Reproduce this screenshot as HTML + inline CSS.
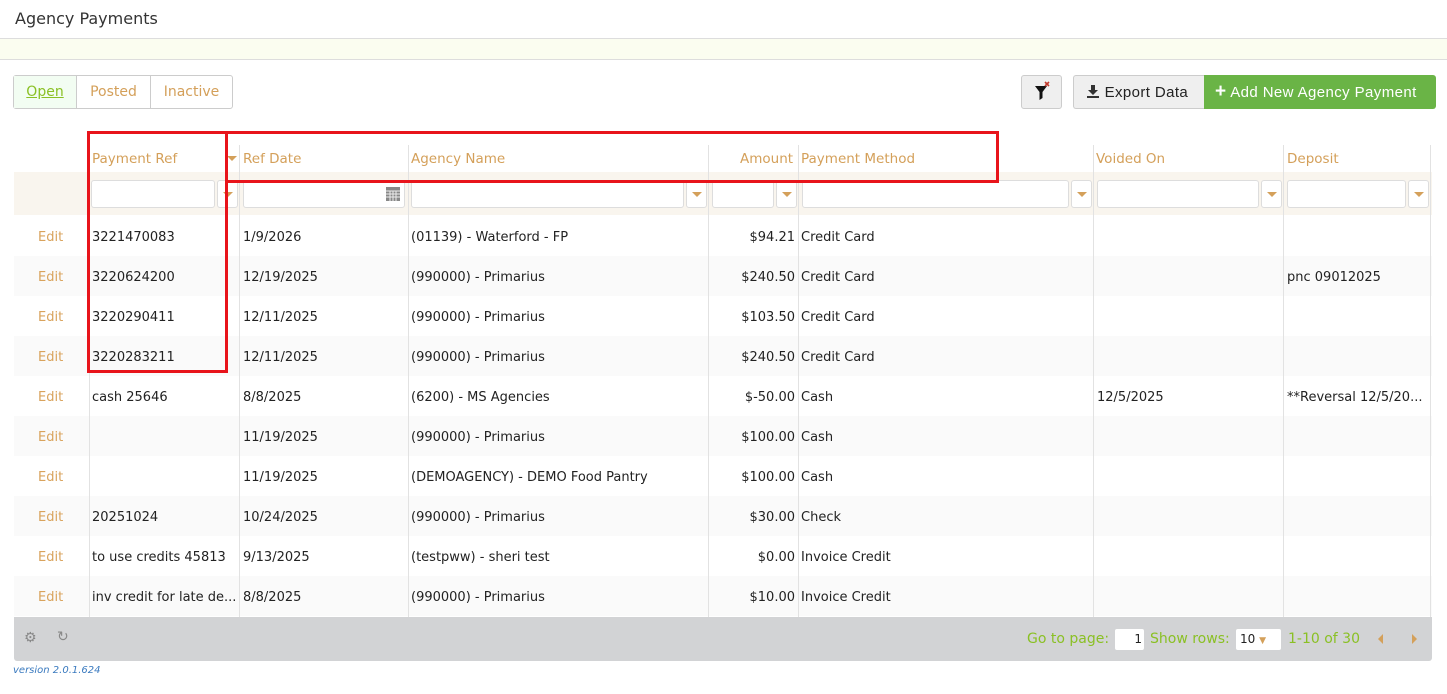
<!DOCTYPE html>
<html><head><meta charset="utf-8"><style>
*{box-sizing:border-box;margin:0;padding:0}
body{width:1447px;height:694px;position:relative;background:#fff;font-family:"DejaVu Sans","Liberation Sans",sans-serif;font-size:13px;color:#222;overflow:hidden}
.a{position:absolute}
.hd{color:#d4a05a;font-size:13.5px}
.vl{position:absolute;width:1px;background:#e2e2e2}
.in{position:absolute;height:28px;top:180px;background:#fff;border:1px solid #ddd;border-radius:3px}
.dd{position:absolute;top:180px;height:28px;width:21px;background:#fff;border:1px solid #ddd;border-radius:3px}
.dd:after{content:"";position:absolute;left:5px;top:11px;border-left:5px solid transparent;border-right:5px solid transparent;border-top:5px solid #d4a05a}
.row{position:absolute;left:14px;width:1418px;height:40px}
.row div{position:absolute;top:14px;white-space:nowrap}
.e{left:24px;color:#d9a35c}
.c1{left:78px}.c2{left:229px}.c3{left:397px}.c4{right:637px}.c5{left:787px}.c6{left:1083px}.c7{left:1273px}
</style></head><body>
<div class="a" style="left:15px;top:9px;font-size:16px;color:#333">Agency Payments</div>
<div class="a" style="left:0;top:38px;width:1447px;height:22px;background:#fbfdf0;border-top:1px solid #ddd;border-bottom:1px solid #ddd"></div>
<div class="a" style="left:13px;top:75px;width:220px;height:34px;border:1px solid #ccc;border-radius:3px;display:flex">
<div style="width:63px;background:#f2fdf2;border-right:1px solid #ccc;color:#8ac024;text-decoration:underline;text-align:center;line-height:33px;font-size:14px">Open</div>
<div style="width:74px;border-right:1px solid #ccc;color:#d4a05a;text-align:center;line-height:33px;font-size:14px">Posted</div>
<div style="flex:1;color:#d4a05a;text-align:center;line-height:33px;font-size:14px">Inactive</div></div>
<div class="a" style="left:1021px;top:75px;width:41px;height:34px;background:#efefef;border:1px solid #ccc;border-radius:3px">
<svg width="41" height="32" viewBox="0 0 41 32"><path d="M13 10h12l-4.5 6v6l-3 2v-8z" fill="#111"/><path d="M23 6l4 4M27 6l-4 4" stroke="#c0392b" stroke-width="1.6"/></svg></div>
<div class="a" style="left:1073px;top:75px;width:131px;height:34px;background:#efefef;border:1px solid #ccc;border-right:none;border-radius:3px 0 0 3px;line-height:33px;font-family:'Liberation Sans',sans-serif;font-size:15px;letter-spacing:0.4px;color:#222;padding-left:12px">
<svg width="14" height="14" viewBox="0 0 14 14" style="vertical-align:-1px"><path d="M5 1h4v5h3l-5 5-5-5h3z M1 12h12v2H1z" fill="#333"/></svg> Export Data</div>
<div class="a" style="left:1204px;top:75px;width:232px;height:34px;background:#6ab446;border-radius:0 3px 3px 0;line-height:34px;font-family:'Liberation Sans',sans-serif;font-size:15px;letter-spacing:0.4px;color:#fff;padding-left:11px"><b style="font-size:19px">+</b> Add New Agency Payment</div>
<!-- header -->
<div class="a hd" style="left:92px;top:151px">Payment Ref</div>
<div class="a" style="left:227px;top:156px;border-left:5px solid transparent;border-right:5px solid transparent;border-top:5px solid #d4a05a"></div>
<div class="a hd" style="left:243px;top:151px">Ref Date</div>
<div class="a hd" style="left:411px;top:151px">Agency Name</div>
<div class="a hd" style="left:740px;top:151px">Amount</div>
<div class="a hd" style="left:801px;top:151px">Payment Method</div>
<div class="a hd" style="left:1096px;top:151px">Voided On</div>
<div class="a hd" style="left:1287px;top:151px">Deposit</div>
<div class="a" style="left:14px;top:172px;width:1418px;height:43px;background:#f9f5ee"></div>
<div class="in" style="left:91px;width:124px"></div><div class="dd" style="left:217px"></div>
<div class="in" style="left:243px;width:162px"><svg class="a" style="right:4px;top:6px" width="14" height="14"><rect width="14" height="14" fill="#888"/><path d="M0 4h14M0 7h14M0 10h14M4 4v10M7 4v10M10 4v10" stroke="#eee"/></svg></div>
<div class="in" style="left:411px;width:273px"></div><div class="dd" style="left:686px"></div>
<div class="in" style="left:712px;width:62px"></div><div class="dd" style="left:776px"></div>
<div class="in" style="left:802px;width:267px"></div><div class="dd" style="left:1071px"></div>
<div class="in" style="left:1097px;width:162px"></div><div class="dd" style="left:1261px"></div>
<div class="in" style="left:1287px;width:119px"></div><div class="dd" style="left:1408px"></div>
<!-- rows -->
<div class="row" style="top:216px;background:#fff"><div class="e">Edit</div><div class="c1">3221470083</div><div class="c2">1/9/2026</div><div class="c3">(01139) - Waterford - FP</div><div class="c4">$94.21</div><div class="c5">Credit Card</div></div>
<div class="row" style="top:256px;background:#fafafa"><div class="e">Edit</div><div class="c1">3220624200</div><div class="c2">12/19/2025</div><div class="c3">(990000) - Primarius</div><div class="c4">$240.50</div><div class="c5">Credit Card</div><div class="c7">pnc 09012025</div></div>
<div class="row" style="top:296px;background:#fff"><div class="e">Edit</div><div class="c1">3220290411</div><div class="c2">12/11/2025</div><div class="c3">(990000) - Primarius</div><div class="c4">$103.50</div><div class="c5">Credit Card</div></div>
<div class="row" style="top:336px;background:#fafafa"><div class="e">Edit</div><div class="c1">3220283211</div><div class="c2">12/11/2025</div><div class="c3">(990000) - Primarius</div><div class="c4">$240.50</div><div class="c5">Credit Card</div></div>
<div class="row" style="top:376px;background:#fff"><div class="e">Edit</div><div class="c1">cash 25646</div><div class="c2">8/8/2025</div><div class="c3">(6200) - MS Agencies</div><div class="c4">$-50.00</div><div class="c5">Cash</div><div class="c6">12/5/2025</div><div class="c7">**Reversal 12/5/20...</div></div>
<div class="row" style="top:416px;background:#fafafa"><div class="e">Edit</div><div class="c2">11/19/2025</div><div class="c3">(990000) - Primarius</div><div class="c4">$100.00</div><div class="c5">Cash</div></div>
<div class="row" style="top:456px;background:#fff"><div class="e">Edit</div><div class="c2">11/19/2025</div><div class="c3">(DEMOAGENCY) - DEMO Food Pantry</div><div class="c4">$100.00</div><div class="c5">Cash</div></div>
<div class="row" style="top:496px;background:#fafafa"><div class="e">Edit</div><div class="c1">20251024</div><div class="c2">10/24/2025</div><div class="c3">(990000) - Primarius</div><div class="c4">$30.00</div><div class="c5">Check</div></div>
<div class="row" style="top:536px;background:#fff"><div class="e">Edit</div><div class="c1">to use credits 45813</div><div class="c2">9/13/2025</div><div class="c3">(testpww) - sheri test</div><div class="c4">$0.00</div><div class="c5">Invoice Credit</div></div>
<div class="row" style="top:576px;background:#fafafa"><div class="e">Edit</div><div class="c1">inv credit for late de...</div><div class="c2">8/8/2025</div><div class="c3">(990000) - Primarius</div><div class="c4">$10.00</div><div class="c5">Invoice Credit</div></div>
<!-- vertical lines -->
<div class="vl" style="left:89px;top:216px;height:401px"></div>
<div class="vl" style="left:239px;top:145px;height:472px"></div>
<div class="vl" style="left:408px;top:145px;height:472px"></div>
<div class="vl" style="left:708px;top:145px;height:472px"></div>
<div class="vl" style="left:798px;top:145px;height:472px"></div>
<div class="vl" style="left:1093px;top:145px;height:472px"></div>
<div class="vl" style="left:1283px;top:145px;height:472px"></div>
<div class="vl" style="left:1430px;top:145px;height:472px"></div>
<!-- footer -->
<div class="a" style="left:14px;top:617px;width:1418px;height:44px;background:#d2d3d5;border-radius:0 0 3px 3px"></div>
<div class="a" style="left:24px;top:630px;color:#888;font-size:14px">⚙</div>
<div class="a" style="left:57px;top:629px;color:#888;font-size:14px">↻</div>
<div class="a" style="left:1027px;top:631px;color:#8ac024;font-size:14px">Go to page:</div>
<div class="a" style="left:1115px;top:629px;width:29px;height:21px;background:#fff;border-radius:2px;text-align:right;padding-right:2px;line-height:21px;font-size:12px">1</div>
<div class="a" style="left:1150px;top:631px;color:#8ac024;font-size:14px">Show rows:</div>
<div class="a" style="left:1236px;top:629px;width:45px;height:21px;background:#fff;border-radius:2px;line-height:21px;font-size:12px;padding-left:4px">10 <span style="color:#d4a05a;font-size:9px">▼</span></div>
<div class="a" style="left:1288px;top:631px;color:#8ac024;font-size:14px">1-10 of 30</div>
<div class="a" style="left:1378px;top:634px;border-top:5px solid transparent;border-bottom:5px solid transparent;border-right:5px solid #d4a05a"></div>
<div class="a" style="left:1412px;top:634px;border-top:5px solid transparent;border-bottom:5px solid transparent;border-left:5px solid #d4a05a"></div>
<div class="a" style="left:13px;top:665px;color:#3a7abf;font-size:10px;font-style:italic">version 2.0.1.624</div>
<!-- red boxes -->
<div class="a" style="left:87px;top:131px;width:141px;height:242px;border:3px solid #e8141b"></div>
<div class="a" style="left:225px;top:131px;width:774px;height:52px;border:3px solid #e8141b"></div>
</body></html>
